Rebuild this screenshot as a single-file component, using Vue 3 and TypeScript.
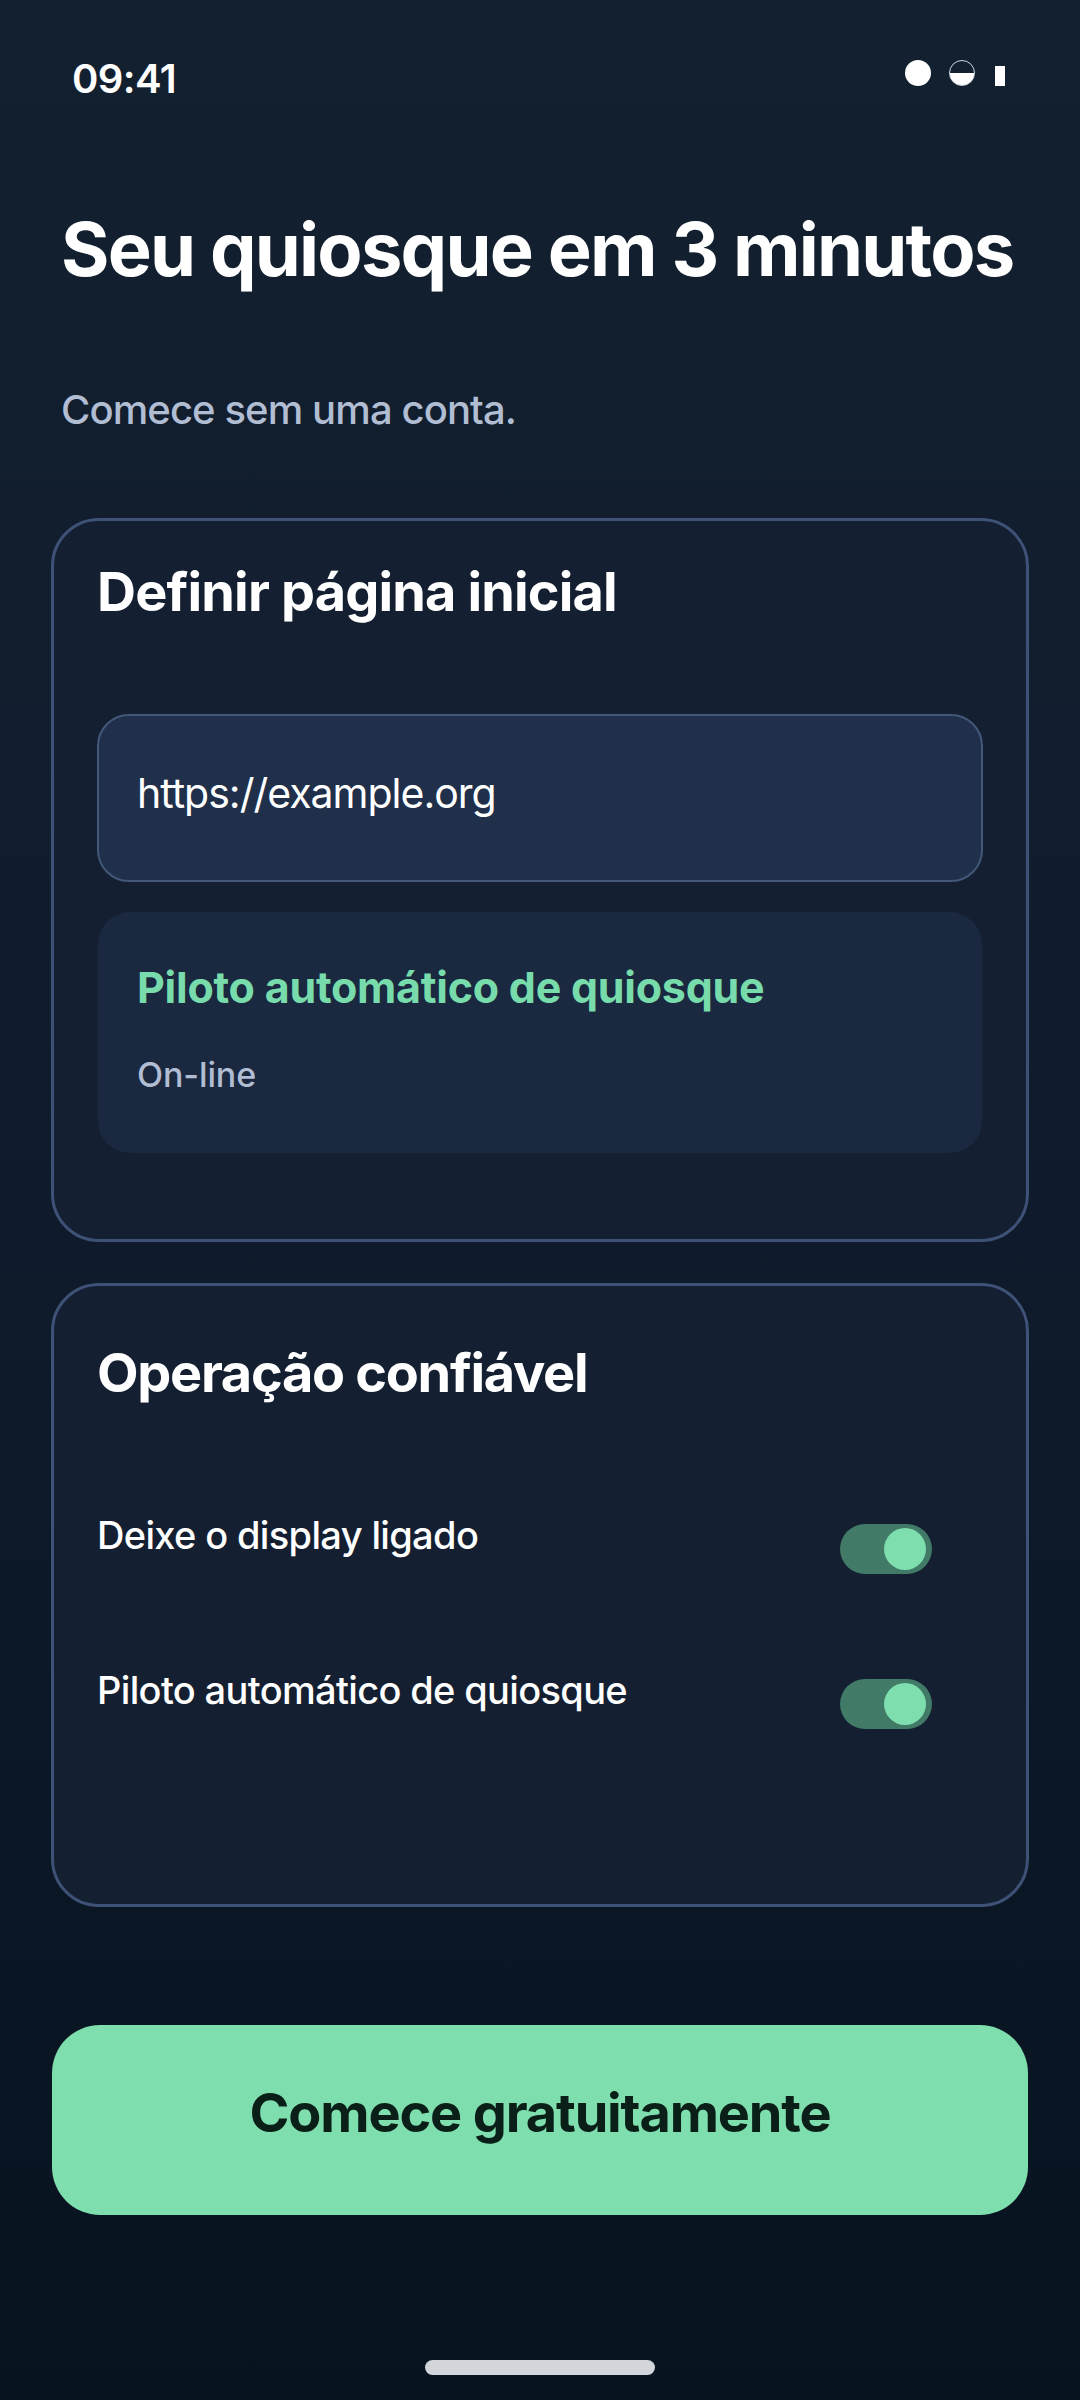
<script setup lang="ts">
const toggles: string[] = ['Deixe o display ligado', 'Piloto automático de quiosque']
</script>

<template>
  <main class="screen">
    <header class="status">
      <span class="time">09:41</span>
      <div class="indicators">
        <span class="dot"></span>
        <span class="half"></span>
        <span class="bar"></span>
      </div>
    </header>

    <h1 class="title">Seu quiosque em 3 minutos</h1>
    <p class="sub">Comece sem uma conta.</p>

    <section class="card first">
      <h2>Definir página inicial</h2>
      <div class="field">https://example.org</div>
      <div class="state">
        <div class="state-title">Piloto automático de quiosque</div>
        <div class="state-sub">On-line</div>
      </div>
    </section>

    <section class="card second">
      <h2>Operação confiável</h2>
      <div class="rows">
        <div v-for="t in toggles" :key="t" class="row">
          <span class="label">{{ t }}</span>
          <span class="switch"><span class="knob"></span></span>
        </div>
      </div>
    </section>

    <button class="cta" type="button">Comece gratuitamente</button>

    <div class="home"></div>
  </main>
</template>

<style>
html, body { margin: 0; background: #07131f; }
</style>

<style scoped>
.screen {
  box-sizing: border-box;
  width: 1080px;
  height: 2400px;
  padding: 0 51px;
  display: flex;
  flex-direction: column;
  font-family: Inter, "Noto Sans", sans-serif;
  color: #fff;
  background: linear-gradient(180deg, #13202f 0%, #101c2d 45%, #07131f 100%);
}
.status {
  height: 0;
  padding: 60px 24px 0 21px;
  display: flex;
  justify-content: space-between;
  align-items: flex-start;
}
.time { font-size: 40px; font-weight: 600; line-height: 38px; letter-spacing: -0.6px; }
.indicators { display: flex; align-items: flex-end; gap: 18px; }
.dot { width: 26px; height: 26px; border-radius: 50%; background: #fff; }
.half {
  box-sizing: border-box;
  width: 26px; height: 26px; border-radius: 50%;
  border: 1px solid #cfd9e4;
  background: linear-gradient(180deg, transparent 48%, #fff 48%);
}
.bar { width: 10px; height: 20px; background: #fff; margin-left: 2px; }

.title {
  margin: 147px 0 0 10px;
  font-size: 74px;
  line-height: 84px;
  font-weight: 700;
  letter-spacing: -1.8px;
  white-space: nowrap;
}
.sub {
  margin: 95px 0 0 10px;
  font-size: 40px;
  line-height: 48px;
  font-weight: 450;
  letter-spacing: -0.9px;
  color: #b0bdd2;
}

.card {
  box-sizing: border-box;
  margin-top: 84px;
  padding: 41px 43px 0;
  border: 3px solid #3d5276;
  border-radius: 48px;
  background: #141f31;
}
.first { height: 724px; }
.second { height: 624px; margin-top: 41px; padding-top: 57px; }
.card h2 {
  margin: 0;
  font-size: 54px;
  line-height: 60px;
  font-weight: 700;
  letter-spacing: -0.85px;
}
.card.second h2 { letter-spacing: -1.3px; }
.field {
  box-sizing: border-box;
  height: 168px;
  margin-top: 92px;
  padding: 52px 38px 0;
  border: 2px solid #42577a;
  border-radius: 32px;
  background: #20304a;
  font-size: 41px;
  line-height: 50px;
  letter-spacing: -1px;
}
.state {
  box-sizing: border-box;
  height: 241px;
  margin: 30px 1px 0;
  padding: 50px 39px 0;
  border-radius: 32px;
  background: #1a2840;
}
.state-title {
  font-size: 43px;
  line-height: 50px;
  font-weight: 700;
  letter-spacing: -0.25px;
  color: #78dbab;
}
.state-sub {
  margin-top: 42px;
  font-size: 34px;
  line-height: 42px;
  font-weight: 500;
  letter-spacing: -0.1px;
  color: #b0bdd2;
}
.rows { margin-top: 108px; display: flex; flex-direction: column; gap: 105px; }
.row {
  display: flex;
  justify-content: space-between;
  align-items: flex-start;
  height: 50px;
  padding-right: 51px;
}
.label { font-size: 38px; line-height: 48px; font-weight: 500; letter-spacing: -0.65px; }
.switch {
  position: relative;
  width: 92px;
  height: 50px;
  margin-top: 13px;
  border-radius: 25px;
  background: #417a66;
}
.knob {
  position: absolute;
  top: 4px;
  right: 6px;
  width: 42px;
  height: 42px;
  border-radius: 50%;
  background: #7edeae;
}
.cta {
  height: 190px;
  margin: 118px 1px 0;
  padding: 0 0 16px;
  border: 0;
  border-radius: 48px;
  background: #7edeae;
  color: #0a1f17;
  font-family: inherit;
  font-size: 54px;
  font-weight: 700;
  letter-spacing: -1.15px;
}
.home {
  width: 230px;
  height: 15px;
  margin: 145px auto 0;
  border-radius: 8px;
  background: #d2d5da;
}
</style>
